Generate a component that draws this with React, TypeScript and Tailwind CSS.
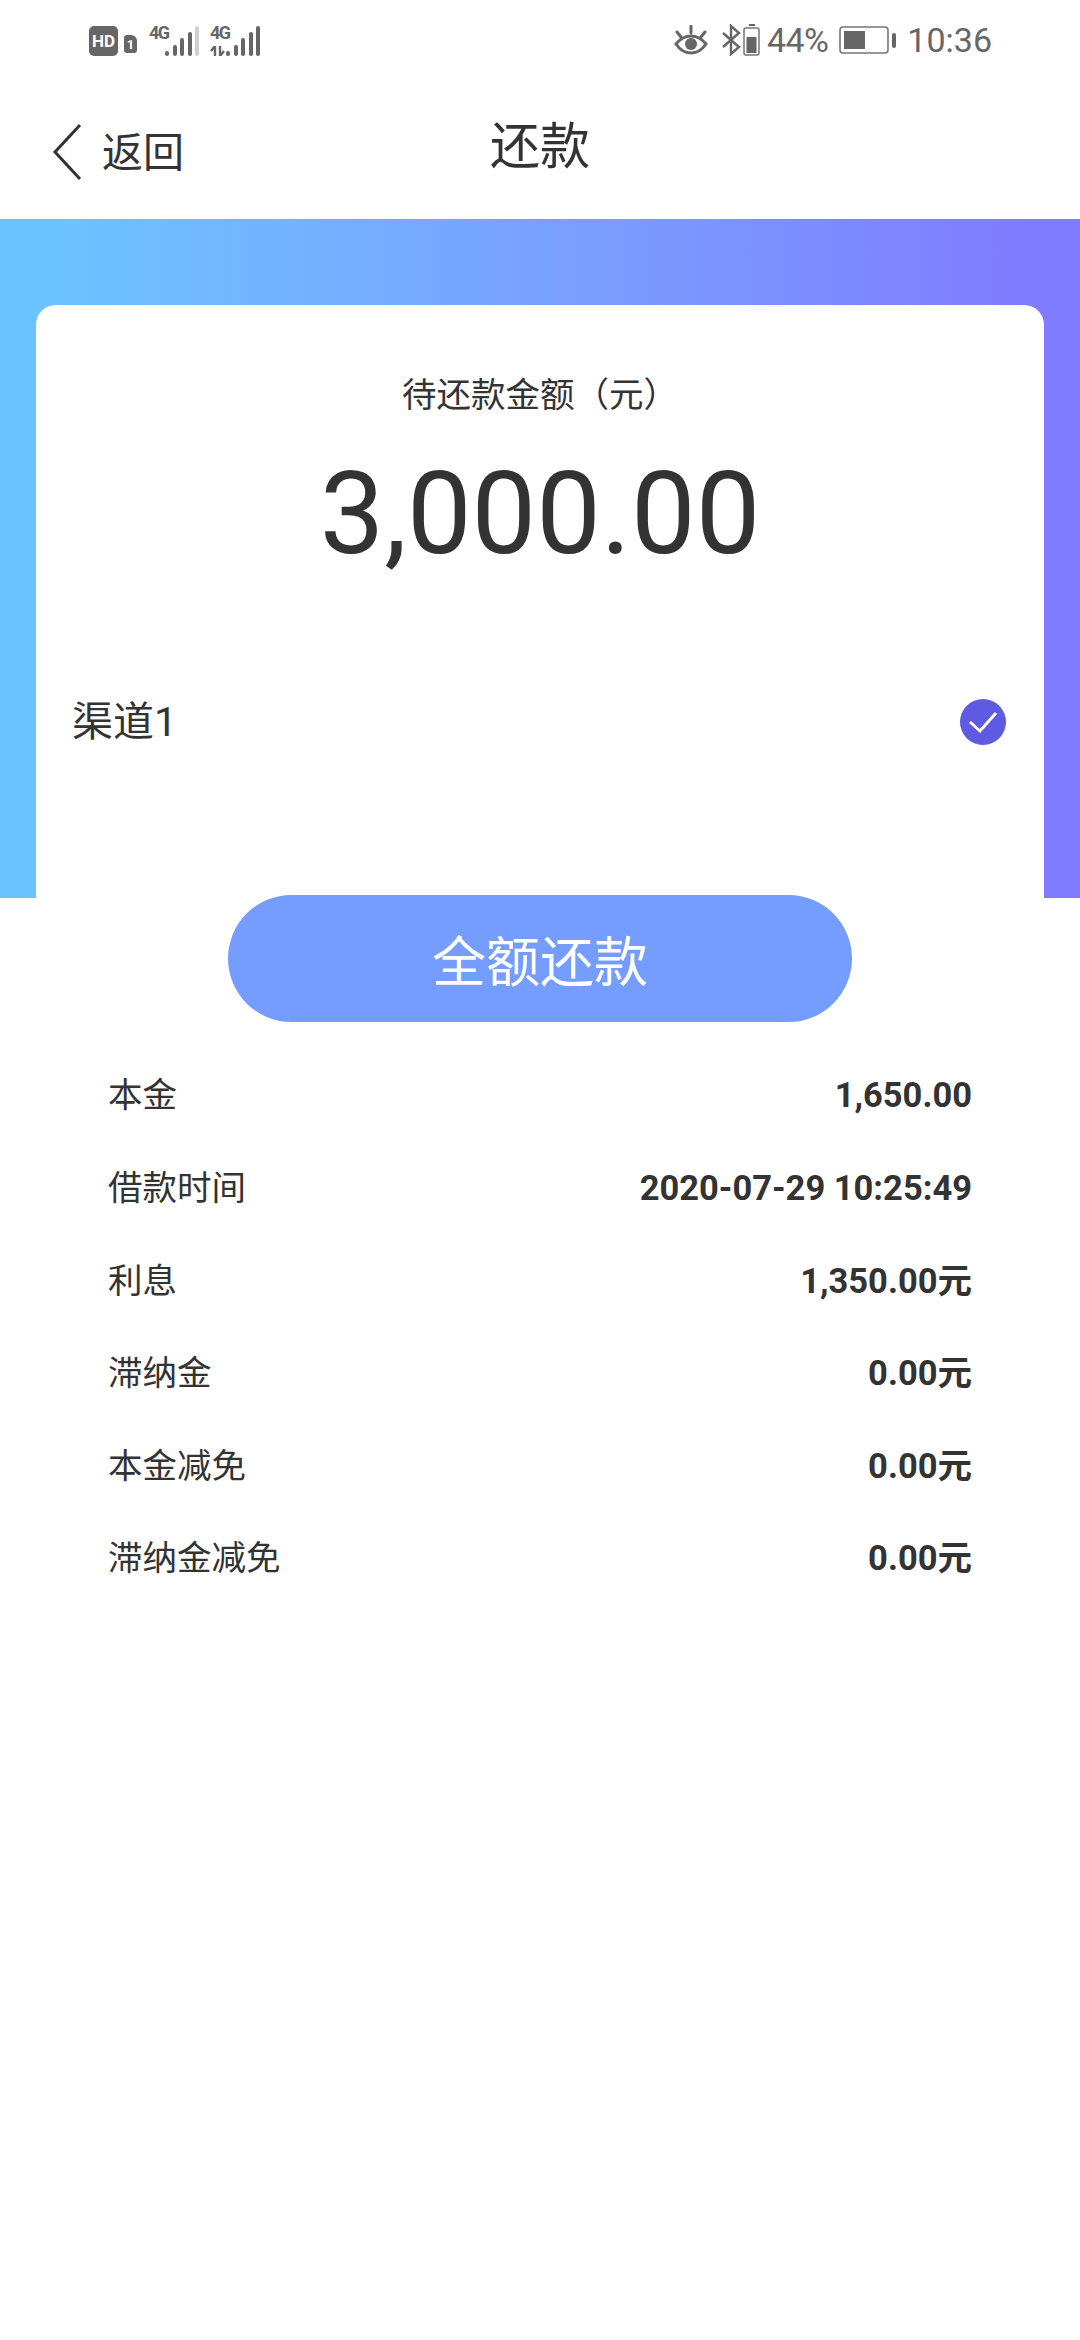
const zh = "font-['Roboto','Noto_Sans_CJK_SC',sans-serif]";

const rows: [string, string][] = [
  ["本金", "1,650.00"],
  ["借款时间", "2020-07-29 10:25:49"],
  ["利息", "1,350.00元"],
  ["滞纳金", "0.00元"],
  ["本金减免", "0.00元"],
  ["滞纳金减免", "0.00元"],
];

function Bars({ dim, arrows }: { dim?: boolean; arrows?: boolean }) {
  const hs = [5, 11, 18, 24, 30];
  return (
    <div className="relative flex items-end w-[50px] h-[31px] justify-end">
      <span className="absolute left-0 top-[-1px] text-[18px] leading-[17px] font-bold text-[#666] font-['Roboto',sans-serif] tracking-[-1.5px]">4G</span>
      {arrows && (
        <svg width="16" height="10" viewBox="0 0 16 10" className="absolute left-0 bottom-0">
          <path d="M5 0v10M1 5l4-5M10 0v10l4-5" stroke="#666" strokeWidth="2.4" fill="none" />
        </svg>
      )}
      <div className="flex items-end gap-[3.5px]">
        {hs.map((h, i) => (
          <span
            key={i}
            style={{ height: h }}
            className={`w-[4px] rounded-[2px] ${dim && i === 4 ? "bg-[#d0d0d0]" : "bg-[#666]"}`}
          />
        ))}
      </div>
    </div>
  );
}

function StatusBar() {
  return (
    <div className="h-[55px] pt-[25px] pl-[89px] pr-[88px] flex items-start justify-between">
      <div className="flex items-start">
        <div className="mt-[1px] w-[29px] h-[30px] rounded-[5px] bg-[#666] flex items-center justify-center text-white text-[17px] leading-none font-bold font-['Roboto',sans-serif]">HD</div>
        <div className="mt-[10px] ml-[6px] w-[13px] h-[18px] rounded-[3px] rounded-tr-[6px] bg-[#666] flex items-center justify-center text-white text-[13px] leading-none font-bold font-['Roboto',sans-serif]">1</div>
        <div className="ml-[12px]"><Bars dim /></div>
        <div className="ml-[11px]"><Bars arrows /></div>
      </div>
      <div className="flex items-center h-[30px] text-[#666] font-['Roboto',sans-serif]">
        <svg width="34" height="30" viewBox="0 0 34 30" fill="none" stroke="#666" strokeWidth="3">
          <path d="M2 19c4-5 9-8 15-8s11 3 15 8c-4 6-9 9-15 9s-11-3-15-9z" />
          <circle cx="17" cy="19" r="6" fill="#666" stroke="none" />
          <path d="M3 7l4 5M17 1v7M31 7l-4 5" strokeLinecap="round" />
        </svg>
        <svg width="24" height="32" viewBox="0 0 24 32" fill="none" stroke="#666" strokeWidth="2.4" className="ml-[11px]">
          <path d="M4 9l16 14-8 7V2l8 7L4 23" />
        </svg>
        <svg width="18" height="32" viewBox="0 0 18 32" fill="none">
          <rect x="6" y="0" width="6" height="2" fill="#666" />
          <rect x="1" y="4" width="15" height="27" rx="2" stroke="#777" strokeWidth="1.5" />
          <rect x="3.5" y="13" width="10" height="16" fill="#666" />
        </svg>
        <span className="ml-[6px] text-[34px] leading-none tracking-[-0.6px]">44%</span>
        <svg width="58" height="30" viewBox="0 0 58 30" fill="none" className="ml-[11px]">
          <rect x="1" y="2" width="48" height="26" rx="3" stroke="#777" strokeWidth="1.6" />
          <rect x="5" y="6" width="21" height="18" fill="#666" />
          <rect x="53" y="8" width="4" height="15" rx="2" fill="#666" />
        </svg>
        <span className="ml-[10px] text-[34px] leading-none">10:36</span>
      </div>
    </div>
  );
}

export default function App() {
  return (
    <div className={`w-[1080px] h-[2340px] bg-white ${zh} text-[#333] overflow-hidden`}>
      <StatusBar />
      <header className="relative h-[164px] flex items-center justify-center">
        <div className="absolute left-[52px] top-[68px] flex items-center">
          <svg width="30" height="58" viewBox="0 0 30 58" fill="none" stroke="#333" strokeWidth="3">
            <path d="M28 2L3 29l25 27" />
          </svg>
          <span className="ml-[20px] mt-[3px] text-[41px] leading-none">返回</span>
        </div>
        <h1 className="text-[50px] font-normal leading-none mt-[20px]">还款</h1>
      </header>
      <section className="h-[679px] pt-[86px] px-[36px] bg-gradient-to-r from-[#6cc3ff] from-5% to-[#7f7cff] to-95%">
        <div className="h-[593px] rounded-t-[20px] bg-white">
          <p className="pt-[66px] text-center text-[34.5px] leading-[48px]">待还款金额（元）</p>
          <p className="mt-[33px] text-center text-[115px] leading-[124px]">3,000.00</p>
          <div className="mt-[118px] pl-[36px] pr-[38px] flex items-center justify-between">
            <span className="text-[41px] leading-[56px]">渠道1</span>
            <span className="w-[46px] h-[46px] rounded-full bg-[#5f5ae2] flex items-center justify-center">
              <svg width="46" height="46" viewBox="0 0 46 46" fill="none" stroke="#fff" strokeWidth="3">
                <path d="M10 23l10 9 16-18" />
              </svg>
            </span>
          </div>
        </div>
      </section>
      <div className="-mt-[3px] relative flex justify-center">
        <button className="w-[624px] h-[127px] pt-[10px] rounded-full bg-[#759cff] text-white text-[54px] leading-none">全额还款</button>
      </div>
      <dl className="mt-[28px] pl-[108px] pr-[108px] flex flex-col">
        {rows.map(([k, v]) => (
          <div key={k} className="h-[92.6px] flex items-center justify-between">
            <dt className="text-[34.5px]">{k}</dt>
            <dd className="text-[34.5px] font-bold">{v}</dd>
          </div>
        ))}
      </dl>
    </div>
  );
}
